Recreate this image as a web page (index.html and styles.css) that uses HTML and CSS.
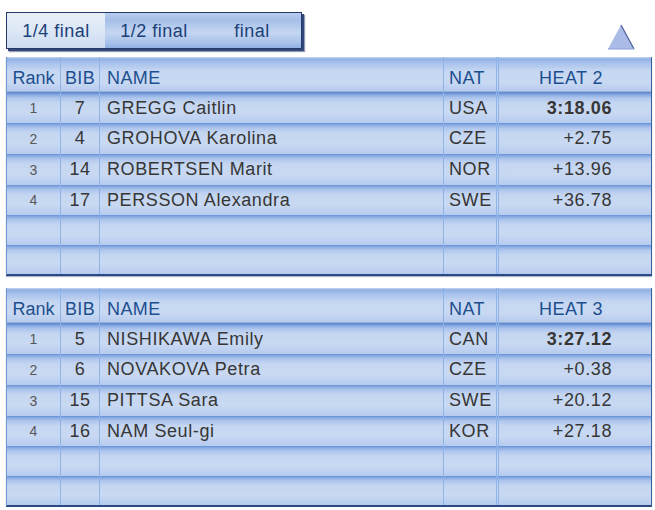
FILE: index.html
```html
<!DOCTYPE html>
<html>
<head>
<meta charset="utf-8">
<link rel="stylesheet" href="styles.css">
</head>
<body>
<div class="page">
  <div class="topbar">
    <div class="tabs">
      <div class="tab sel">1/4 final</div>
      <div class="tab">1/2 final</div>
      <div class="tab">final</div>
    </div>
    <svg class="arrow" width="28" height="26" viewBox="0 0 28 26">
      <polygon points="14,1 27,25 1,25" fill="#a9bbe6"/>
      <line x1="14" y1="1" x2="27" y2="25" stroke="#4a5f96" stroke-width="1.2"/>
      <line x1="1" y1="25" x2="27" y2="25" stroke="#8aa0d4" stroke-width="1"/>
    </svg>
  </div>

  <div class="board">
    <div class="row head">
      <div class="c rank">Rank</div><div class="c bib">BIB</div><div class="c name">NAME</div><div class="c nat">NAT</div><div class="c heat">HEAT 2</div>
    </div>
    <div class="row">
      <div class="c rank">1</div><div class="c bib">7</div><div class="c name">GREGG Caitlin</div><div class="c nat">USA</div><div class="c heat time best">3:18.06</div>
    </div>
    <div class="row">
      <div class="c rank">2</div><div class="c bib">4</div><div class="c name">GROHOVA Karolina</div><div class="c nat">CZE</div><div class="c heat time">+2.75</div>
    </div>
    <div class="row">
      <div class="c rank">3</div><div class="c bib">14</div><div class="c name">ROBERTSEN Marit</div><div class="c nat">NOR</div><div class="c heat time">+13.96</div>
    </div>
    <div class="row">
      <div class="c rank">4</div><div class="c bib">17</div><div class="c name">PERSSON Alexandra</div><div class="c nat">SWE</div><div class="c heat time">+36.78</div>
    </div>
    <div class="row">
      <div class="c rank"></div><div class="c bib"></div><div class="c name"></div><div class="c nat"></div><div class="c heat"></div>
    </div>
    <div class="row">
      <div class="c rank"></div><div class="c bib"></div><div class="c name"></div><div class="c nat"></div><div class="c heat"></div>
    </div>
  </div>

  <div class="board">
    <div class="row head">
      <div class="c rank">Rank</div><div class="c bib">BIB</div><div class="c name">NAME</div><div class="c nat">NAT</div><div class="c heat">HEAT 3</div>
    </div>
    <div class="row">
      <div class="c rank">1</div><div class="c bib">5</div><div class="c name">NISHIKAWA Emily</div><div class="c nat">CAN</div><div class="c heat time best">3:27.12</div>
    </div>
    <div class="row">
      <div class="c rank">2</div><div class="c bib">6</div><div class="c name">NOVAKOVA Petra</div><div class="c nat">CZE</div><div class="c heat time">+0.38</div>
    </div>
    <div class="row">
      <div class="c rank">3</div><div class="c bib">15</div><div class="c name">PITTSA Sara</div><div class="c nat">SWE</div><div class="c heat time">+20.12</div>
    </div>
    <div class="row">
      <div class="c rank">4</div><div class="c bib">16</div><div class="c name">NAM Seul-gi</div><div class="c nat">KOR</div><div class="c heat time">+27.18</div>
    </div>
    <div class="row">
      <div class="c rank"></div><div class="c bib"></div><div class="c name"></div><div class="c nat"></div><div class="c heat"></div>
    </div>
    <div class="row">
      <div class="c rank"></div><div class="c bib"></div><div class="c name"></div><div class="c nat"></div><div class="c heat"></div>
    </div>
  </div>
</div>
</body>
</html>
```

FILE: styles.css
```css
html, body {
  margin: 0;
  padding: 0;
  background: #ffffff;
}

.page {
  padding: 12px 5px 0 6px;
  font-family: "Liberation Sans", Arial, sans-serif;
  display: flex;
  flex-direction: column;
  gap: 12px;
}

.topbar {
  display: flex;
  justify-content: space-between;
  align-items: flex-end;
  height: 38px;
  margin-bottom: -5px;
}

.tabs {
  display: flex;
  width: 294px;
  height: 35px;
  border: 1px solid #24386a;
  box-shadow: 2px 2px 0 #34477a, 3px 3px 1px rgba(40, 60, 110, 0.5);
  background: linear-gradient(#b9cdee 0, #a5bfe9 20%, #c4d6f1 55%, #a9c2ea 85%, #8fb0e2 100%);
  align-self: flex-start;
}

.tab {
  flex: 1;
  display: flex;
  align-items: center;
  justify-content: center;
  padding-top: 2px;
  font-size: 18px;
  letter-spacing: 0.5px;
  color: #1c3f78;
}

.tab.sel {
  background: linear-gradient(#e8eff9 0, #dde8f6 50%, #cddcf2 100%);
}

.arrow {
  display: block;
  margin: 0 15px 0 0;
}

.board {
  width: 644px;
  border-left: 1px solid #6f97d3;
  border-right: 1px solid #3e5f9c;
  border-bottom: 2px solid #2b4a85;
  box-shadow: 0 1px 1px rgba(30, 50, 100, 0.35);
}

.row {
  display: grid;
  grid-template-columns: 53px 39px 344px 53px 1fr;
  height: 30px;
  background: linear-gradient(#6590d6 0, #8cade4 2px, #afc6ed 5px, #c5d6f1 10px, #c9d9f2 65%, #b6cbef 100%);
}

.row:nth-child(3),
.row:nth-child(4) {
  height: 31px;
}

.row:nth-child(7) {
  height: 29px;
}

.row.head {
  height: 36px;
  background: linear-gradient(#c8d9f3 0, #8fb0e3 2px, #a9c2ec 6px, #c6d7f2 14px, #c9d9f2 70%, #b6cbee 94%, #4d78bb 100%);
}

.c {
  box-sizing: border-box;
  display: flex;
  align-items: center;
  font-size: 18px;
  letter-spacing: 0.6px;
  color: #363636;
  white-space: nowrap;
}

.c + .c {
  border-left: 1px solid #8db3e8;
}

.rank {
  justify-content: center;
  font-size: 14px;
  color: #575757;
  letter-spacing: 0;
}

.bib {
  justify-content: center;
}

.name {
  padding-left: 7px;
}

.nat {
  padding-left: 5px;
}

.c.heat {
  border-left: 3px double #8db3e8;
  justify-content: center;
}

.heat.time {
  justify-content: flex-end;
  padding-right: 39px;
}

.best {
  font-weight: bold;
}

.head .c {
  color: #1d4f8f;
  font-size: 18px;
  letter-spacing: 0.4px;
  padding-top: 6px;
}

.head .rank {
  letter-spacing: 0;
}

.head .heat {
  padding-right: 8px;
}
```
